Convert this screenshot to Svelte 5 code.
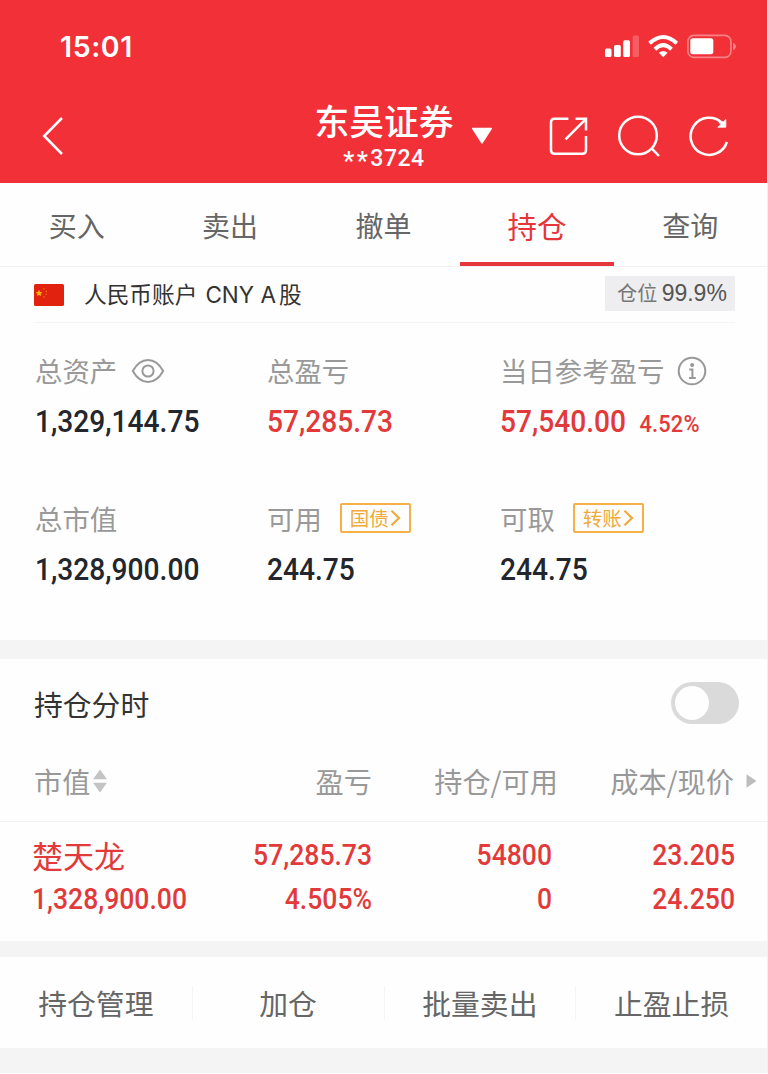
<script lang="ts">
interface Holding {
  name: string;
  value: string;
  profit: string;
  rate: string;
  held: string;
  usable: string;
  cost: string;
  price: string;
}

const tabs = ["买入", "卖出", "撤单", "持仓", "查询"];
const actions = ["持仓管理", "加仓", "批量卖出", "止盈止损"];
const holdings: Holding[] = [
  {
    name: "楚天龙",
    value: "1,328,900.00",
    profit: "57,285.73",
    rate: "4.505%",
    held: "54800",
    usable: "0",
    cost: "23.205",
    price: "24.250",
  },
];

let activeTab = $state("持仓");
let intraday = $state(false);
</script>

<div class="screen">
  <header>
    <div class="status">
      <span class="time">15:01</span>
      <svg class="status-icons" width="134" height="26" viewBox="0 0 134 26" aria-hidden="true">
        <g fill="#fff">
          <rect x="1" y="14.5" width="6.5" height="8.5" rx="1.6" />
          <rect x="10" y="11" width="6.8" height="12" rx="1.6" />
          <rect x="19.2" y="6.3" width="6.8" height="16.7" rx="1.6" />
          <rect x="28.6" y="1.5" width="6.4" height="21.5" rx="1.6" opacity="0.22" />
        </g>
        <g fill="none" stroke="#fff" stroke-width="4">
          <path d="M45.6 9.2Q59.2 -3.2 72.8 9.2" />
          <path d="M50.9 15.2Q59.2 7.2 67.5 15.2" />
        </g>
        <path d="M54.8 18.8Q59.2 15.4 63.6 18.8L59.2 23.2Z" fill="#fff" />
        <rect x="83.9" y="1.4" width="43" height="22" rx="6" fill="none" stroke="#fff" stroke-width="1.6" opacity="0.4" />
        <rect x="86.3" y="4.3" width="23" height="16" rx="2.5" fill="#fff" />
        <path d="M129 8.8Q132 10 132 12.4Q132 14.8 129 16Z" fill="#fff" opacity="0.4" />
      </svg>
    </div>
    <nav>
      <button class="back" aria-label="返回">
        <svg width="24" height="40" viewBox="0 0 24 40"><path d="M21 2L3.2 20L21 38" fill="none" stroke="#fff" stroke-width="2.5" /></svg>
      </button>
      <div class="broker">
        <span class="broker-name">东吴证券</span>
        <span class="broker-no"><span class="mask">**</span>3724</span>
      </div>
      <svg class="caret" width="22" height="18" viewBox="0 0 22 18" aria-hidden="true"><path d="M1.8 1.5H20.2L11 15.8Z" fill="#fff" stroke="#fff" stroke-width="1.6" stroke-linejoin="round" /></svg>
      <div class="tools">
        <svg width="42" height="42" viewBox="0 0 42 42" fill="none" stroke="#fff" stroke-width="2.5">
          <path d="M20.4 3.8H6.5Q3 3.8 3 7.3V35Q3 38.8 6.5 38.8H34.5Q38 38.8 38 35V21" />
          <path d="M27.5 3.8H38V15.5M37.5 4.3L17.5 24.4" />
        </svg>
        <svg width="44" height="44" viewBox="0 0 44 44" fill="none" stroke="#fff" stroke-width="2.5">
          <circle cx="21" cy="21.5" r="18.8" />
          <path d="M34.4 34.2L42 42" />
        </svg>
        <svg width="44" height="44" viewBox="0 0 44 44">
          <path d="M38.9 28A18.6 18.6 0 1 1 34 8.8" fill="none" stroke="#fff" stroke-width="2.5" />
          <path d="M37.8 5.4V13.2H29.8L32.8 10.6L30.8 8L35.6 7.8Z" fill="#fff" stroke="#fff" stroke-width="0.8" />
        </svg>
      </div>
    </nav>
  </header>

  <div class="tabs" role="tablist">
    {#each tabs as tab}
      <button role="tab" class:on={tab === activeTab} aria-selected={tab === activeTab} onclick={() => (activeTab = tab)}>{tab}</button>
    {/each}
  </div>

  <div class="account">
    <svg class="flag" width="30" height="22" viewBox="0 0 30 22" aria-hidden="true">
      <rect width="30" height="22" rx="1.5" fill="#e0220f" />
      <path d="M5 5.8L6 8L8.3 8.2L6.6 9.8L7.1 12.1L5 10.9L2.9 12.1L3.4 9.8L1.7 8.2L4 8Z" fill="#fb0" />
      <g fill="#f08a18" opacity="0.8">
        <circle cx="10" cy="4.8" r="0.8" />
        <circle cx="12.3" cy="7.2" r="0.8" />
        <circle cx="12.3" cy="10.3" r="0.8" />
        <circle cx="10" cy="13" r="0.8" />
      </g>
    </svg>
    <span class="account-name">人民币账户<span class="latin">CNY A</span>股</span>
    <span class="ratio">仓位 <b>99.9%</b></span>
  </div>

  <section class="summary">
    <div class="cell">
      <div class="label">
        总资产
        <svg class="eye" width="34" height="26" viewBox="0 0 34 26" fill="none" stroke="#999" stroke-width="2">
          <path d="M1.8 13Q8 2 17 2T32.2 13Q26 24 17 24T1.8 13Z" />
          <circle cx="17" cy="13" r="5.6" />
        </svg>
      </div>
      <div class="value">1,329,144.75</div>
    </div>
    <div class="cell">
      <div class="label">总盈亏</div>
      <div class="value up">57,285.73</div>
    </div>
    <div class="cell">
      <div class="label">
        当日参考盈亏
        <svg class="info" width="30" height="30" viewBox="0 0 30 30" fill="none" stroke="#999" stroke-width="2">
          <circle cx="15" cy="15" r="13.3" />
          <path d="M12.2 13.4H15.4V21.6M12 22H18.8" />
          <circle cx="15.2" cy="9" r="1.6" fill="#999" stroke-width="1" />
        </svg>
      </div>
      <div class="value up">57,540.00 <small>4.52%</small></div>
    </div>
    <div class="cell">
      <div class="label">总市值</div>
      <div class="value">1,328,900.00</div>
    </div>
    <div class="cell">
      <div class="label">
        可用
        <button class="link">国债<svg width="11" height="18" viewBox="0 0 11 18"><path d="M1.5 1.8L9 9L1.5 16.2" fill="none" stroke="#f0a93b" stroke-width="2.2" /></svg></button>
      </div>
      <div class="value">244.75</div>
    </div>
    <div class="cell">
      <div class="label">
        可取
        <button class="link">转账<svg width="11" height="18" viewBox="0 0 11 18"><path d="M1.5 1.8L9 9L1.5 16.2" fill="none" stroke="#f0a93b" stroke-width="2.2" /></svg></button>
      </div>
      <div class="value">244.75</div>
    </div>
  </section>

  <section class="holdings">
    <div class="chart-row">
      <span>持仓分时</span>
      <button class="switch" class:on={intraday} role="switch" aria-checked={intraday} aria-label="持仓分时" onclick={() => (intraday = !intraday)}><i></i></button>
    </div>
    <div class="row head">
      <span class="sortable">市值<svg width="14" height="24" viewBox="0 0 14 24" fill="#c4c4c4"><path d="M7 0.5L14 10.3H0ZM0 13.7H14L7 23.5Z" /></svg></span>
      <span>盈亏</span>
      <span class="wide">持仓/可用</span>
      <span class="last">成本/现价</span>
      <svg class="more" width="11" height="14" viewBox="0 0 11 14"><path d="M0.5 0.3L10.5 7L0.5 13.7Z" fill="#bdbdbd" /></svg>
    </div>
    {#each holdings as h}
      <div class="row stock">
        <div><span class="name">{h.name}</span><span>{h.value}</span></div>
        <div><span>{h.profit}</span><span>{h.rate}</span></div>
        <div><span>{h.held}</span><span>{h.usable}</span></div>
        <div><span>{h.cost}</span><span>{h.price}</span></div>
      </div>
    {/each}
  </section>

  <div class="actions">
    {#each actions as action}
      <button>{action}</button>
    {/each}
  </div>
</div>

<style>
  :global(body) {
    background: #fff;
  }
  .screen {
    box-sizing: border-box;
    width: 768px;
    height: 1073px;
    overflow: hidden;
    background: #f4f4f4;
    border-right: 1px solid #f0f0f1;
    font-family: "Noto Sans CJK SC", sans-serif;
    color: #333;
  }
  button {
    padding: 0;
    border: none;
    background: none;
    font: inherit;
    color: inherit;
    cursor: pointer;
  }
  svg {
    display: block;
    flex: none;
  }

  header {
    height: 183px;
    background: #f23038;
    color: #fff;
  }
  .status {
    display: flex;
    justify-content: space-between;
    align-items: center;
    box-sizing: border-box;
    height: 88px;
    padding: 6px 29px 0 60px;
  }
  .time {
    font: 600 28.5px/34px Inter, sans-serif;
    letter-spacing: 0.6px;
  }
  nav {
    display: grid;
    grid-template-columns: 315px 138px 40px 1fr;
    align-items: center;
    height: 95px;
  }
  .back {
    justify-self: start;
    margin-left: 41px;
  }
  .broker {
    display: flex;
    flex-direction: column;
    align-items: center;
    white-space: nowrap;
  }
  .broker-name {
    font-size: 34.8px;
    font-weight: 500;
    line-height: 44px;
    margin-top: -2px;
  }
  .broker-no {
    font: 500 23px/26px Roboto, sans-serif;
    letter-spacing: 0.5px;
    margin-top: 4px;
  }
  /* Asterisks sit high in the em box; drop them to the middle of the digits. */
  .mask {
    font-size: 25px;
    line-height: 20px;
    letter-spacing: 2.4px;
    vertical-align: -4px;
  }
  .caret {
    justify-self: end;
  }
  .tools {
    display: flex;
    align-items: center;
    gap: 27px;
    margin: 1px 0 0 55px;
  }

  .tabs {
    display: grid;
    grid-template-columns: repeat(5, 1fr);
    box-sizing: border-box;
    height: 84px;
    background: #fefefe;
    border-bottom: 1px solid #f0f0f0;
  }
  .tabs button {
    box-sizing: border-box;
    border-bottom: 4px solid transparent;
    padding-top: 4px;
    font-size: 28px;
    color: #666;
  }
  .tabs button.on {
    border-color: #e6353b;
    color: #e6353b;
    font-size: 29.5px;
  }

  .account {
    display: flex;
    align-items: center;
    box-sizing: border-box;
    height: 56px;
    padding: 0 32px 0 34px;
    background: linear-gradient(#f5f5f5, #f5f5f5) 34px 100% / 701px 1px no-repeat #fefefe;
  }
  .account-name {
    margin: -2px 0 0 20px;
    font-size: 22.7px;
    line-height: 32px;
    color: #333;
  }
  .latin {
    margin: 0 3px 0 8px;
    font: 22.5px Inter, sans-serif;
  }
  .ratio {
    box-sizing: border-box;
    width: 130px;
    height: 35px;
    padding-left: 4px;
    margin: 0 0 4px auto;
    background: #eeeef0;
    font-size: 20px;
    line-height: 34px;
    text-align: center;
    white-space: nowrap;
    color: #777;
  }
  .ratio b {
    font: 23px "Liberation Sans", sans-serif;
    color: #555;
  }

  .summary {
    display: grid;
    grid-template-columns: 232px 233px 1fr;
    grid-auto-rows: 148px;
    box-sizing: border-box;
    height: 317px;
    padding: 27px 0 0 35px;
    background: #fefefe;
  }
  .label {
    display: flex;
    align-items: center;
    height: 40px;
    font-size: 27.4px;
    color: #999;
  }
  .eye {
    margin: 2px 0 0 14px;
  }
  .info {
    margin: 2px 0 0 13px;
  }
  /* Roboto squeezed horizontally to stand in for the narrow DIN numerals. */
  .value {
    margin-top: 12px;
    font: 500 31px/40px Roboto, sans-serif;
    white-space: nowrap;
    transform: scaleX(0.908);
    transform-origin: left;
    color: #23262d;
  }
  .value.up {
    color: #e23a3a;
  }
  .value small {
    font-size: 24px;
    letter-spacing: 0.2px;
    margin-left: 7px;
  }
  .link {
    display: flex;
    align-items: center;
    justify-content: center;
    gap: 1px;
    box-sizing: border-box;
    width: 71px;
    height: 30px;
    margin: 0 0 0 18px;
    border: 2px solid #f5b04a;
    border-radius: 2px;
    font-size: 19.5px;
    line-height: 26px;
    color: #f0a93b;
  }

  .holdings {
    box-sizing: border-box;
    height: 282px;
    margin-top: 19px;
    background: #fefefe;
  }
  .chart-row {
    display: flex;
    align-items: center;
    justify-content: space-between;
    height: 88px;
    padding: 0 28px 0 34px;
    font-size: 28.8px;
  }
  .switch {
    width: 68px;
    height: 42px;
    padding: 4px;
    border-radius: 21px;
    background: #dadada;
  }
  .switch i {
    display: block;
    width: 34px;
    height: 34px;
    border-radius: 50%;
    background: #fefefe;
  }
  .switch.on {
    background: #e6353b;
  }
  .switch.on i {
    margin-left: auto;
  }
  .row {
    display: grid;
    grid-template-columns: 200px 140px 180px 183px auto;
    padding-left: 32px;
    text-align: right;
  }
  .head {
    align-items: center;
    box-sizing: border-box;
    height: 75px;
    padding-bottom: 7px;
    border-bottom: 1px solid #f2f2f2;
    font-size: 28.2px;
    white-space: nowrap;
    color: #999;
  }
  .wide {
    margin-right: -6px;
  }
  .last {
    margin-right: 1px;
  }
  .sortable {
    display: flex;
    align-items: center;
    gap: 3px;
    padding-left: 2px;
  }
  .more {
    margin-left: 11px;
  }
  .stock {
    padding-top: 11px;
    font: 500 29px/44px Roboto, sans-serif;
    color: #e23a3a;
  }
  .stock div {
    display: flex;
    flex-direction: column;
  }
  .stock span {
    transform: scaleX(0.915);
    transform-origin: right;
  }
  .stock div:first-child {
    text-align: left;
  }
  .stock div:first-child span {
    transform-origin: left;
  }
  .stock .name {
    font: 31px/44px "Noto Sans CJK SC", sans-serif;
    transform: none;
  }

  .actions {
    display: grid;
    grid-template-columns: repeat(4, 1fr);
    align-items: center;
    height: 91px;
    margin-top: 16px;
    background: #fefefe;
  }
  .actions button {
    height: 34px;
    font-size: 28.8px;
    line-height: 34px;
    color: #666;
  }
  .actions button + button {
    border-left: 1px solid #f4f4f4;
  }
</style>
